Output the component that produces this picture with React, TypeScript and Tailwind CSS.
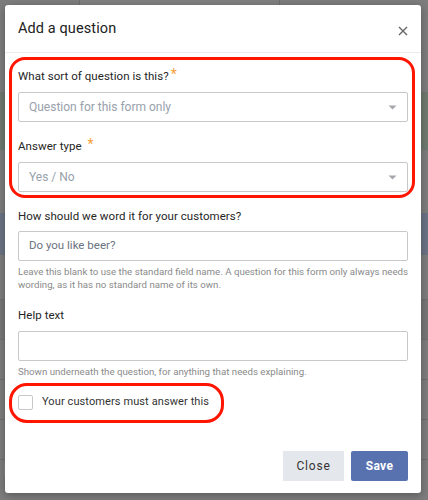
import React from "react";

function Caret() {
  return (
    <svg width="9" height="5" viewBox="0 0 9 5" className="shrink-0">
      <path d="M0.5 0.5 L4.5 4.5 L8.5 0.5 Z" fill="#a4a8ac" />
    </svg>
  );
}

function Select({ value }: { value: string }) {
  return (
    <div className="flex h-[30px] items-center justify-between rounded-[2px] border border-[#c8c8c8] bg-white pl-[10px] pr-[10px]">
      <span className="text-[12px] text-[#98a1ac]">{value}</span>
      <Caret />
    </div>
  );
}

function Label({ children, star, gap }: { children: React.ReactNode; star?: boolean; gap?: boolean }) {
  return (
    <div className="flex h-[14px] items-start text-[11.5px] leading-[14px] tracking-[0.05px] text-[#262626]">
      <span>{children}</span>
      {star && (
        <span className={`-mt-[2px] text-[14px] leading-[14px] text-[#f5a03c] ${gap ? "ml-[6px]" : "ml-[2px]"}`}>*</span>
      )}
    </div>
  );
}

export default function App() {
  return (
    <div
      className="relative h-[500px] w-[428px] overflow-hidden bg-[#7d7d7d]"
      style={{ fontFamily: "Roboto, 'Liberation Sans', sans-serif" }}
    >
      {/* dimmed page behind */}
      <div className="flex h-full flex-col">
        <div className="flex h-[16px] shrink-0">
          <div className="w-[80px] border-r border-[#6f6f6f]" />
          <div className="flex w-[200px] items-center border-r border-[#6f6f6f] bg-[#808080] pl-[8px]" />
        </div>
        <div className="h-[77px] shrink-0 border-b border-[#737373]" />
        <div className="h-[57px] shrink-0 bg-[#6f7a6f]" />
        <div className="h-[63px] shrink-0" />
        <div className="h-[42px] shrink-0 bg-[#6b7384]" />
        <div className="h-[45px] shrink-0 border-b border-[#707070]" />
        <div className="h-[40px] shrink-0 border-b border-[#707070] bg-[#777]" />
        <div className="h-[40px] shrink-0 border-b border-[#707070]" />
        <div className="h-[40px] shrink-0 border-b border-[#707070]" />
        <div className="h-[40px] shrink-0 border-b border-[#707070]" />
        <div className="flex items-start pt-[2px] text-[11px] leading-[14px] text-[#222]">
          <span className="ml-[4px] bg-[#888] px-[2px]">Built-in field</span>
          <span className="ml-[125px]">Yes</span>
        </div>
      </div>

      {/* modal */}
      <div className="absolute left-[5px] top-[5px] flex h-[488px] w-[416px] flex-col rounded-[3px] bg-white shadow-[0_2px_8px_rgba(0,0,0,0.3)]">
        <div className="flex h-[48px] shrink-0 items-center justify-between border-b border-[#ececec] pl-[13px] pr-[13px]">
          <span className="pt-[1px] text-[14.5px] tracking-[0.1px] text-[#222]">Add a question</span>
          <svg width="10" height="10" viewBox="0 0 10 10" className="mt-[5px]">
            <path d="M1 1 L9 9 M9 1 L1 9" stroke="#666" strokeWidth="1.4" />
          </svg>
        </div>

        <div className="flex flex-1 flex-col px-[13px]">
          {/* red annotated box 1 */}
          <div className="-ml-[9px] -mr-[7px] mt-[4px] rounded-[16px] border-[3px] border-[#ff1500] pb-[3px] pl-[6px] pr-[4px] pt-[9px]">
            <Label star>What sort of question is this?</Label>
            <div className="mt-[9px]">
              <Select value="Question for this form only" />
            </div>
            <div className="mt-[17px]">
              <Label star gap>Answer type</Label>
            </div>
            <div className="mt-[9px]">
              <Select value="Yes / No" />
            </div>
          </div>

          <div className="mt-[11px]">
            <Label>How should we word it for your customers?</Label>
          </div>
          <div className="mt-[8px] flex h-[30px] items-center rounded-[2px] border border-[#c8c8c8] pl-[10px]">
            <span className="text-[11.5px] text-[#6b7280]">Do you like beer?</span>
          </div>
          <div className="mt-[4px] text-[9.7px] leading-[13px] text-[#8a8a8a]">
            Leave this blank to use the standard field name. A question for this form only always needs wording, as it has no standard name of its own.
          </div>

          <div className="mt-[17px]">
            <Label>Help text</Label>
          </div>
          <div className="mt-[9px] h-[30px] rounded-[2px] border border-[#c8c8c8]" />
          <div className="mt-[4px] text-[9.7px] leading-[13px] text-[#8a8a8a]">
            Shown underneath the question, for anything that needs explaining.
          </div>

          {/* red annotated box 2 */}
          <div className="-ml-[9px] mt-[5px] flex h-[40px] w-[215px] items-center rounded-[18px] border-[3px] border-[#ff1500] pb-[2px] pl-[6px]">
            <div className="h-[15px] w-[15px] rounded-[2px] border border-[#c8c8c8] bg-white" />
            <span className="ml-[9px] text-[11px] tracking-[0.1px] text-[#333]">Your customers must answer this</span>
          </div>

          <div className="mt-auto flex justify-end gap-[7px] pb-[12px]">
            <div className="flex h-[30px] w-[61px] items-center justify-center bg-[#e4e7eb] text-[12px] tracking-[0.8px] text-[#333]">
              Close
            </div>
            <div className="flex h-[30px] w-[57px] items-center justify-center rounded-[2px] bg-[#5872b0] text-[12px] font-bold tracking-[0.3px] text-white">
              Save
            </div>
          </div>
        </div>
      </div>
    </div>
  );
}
